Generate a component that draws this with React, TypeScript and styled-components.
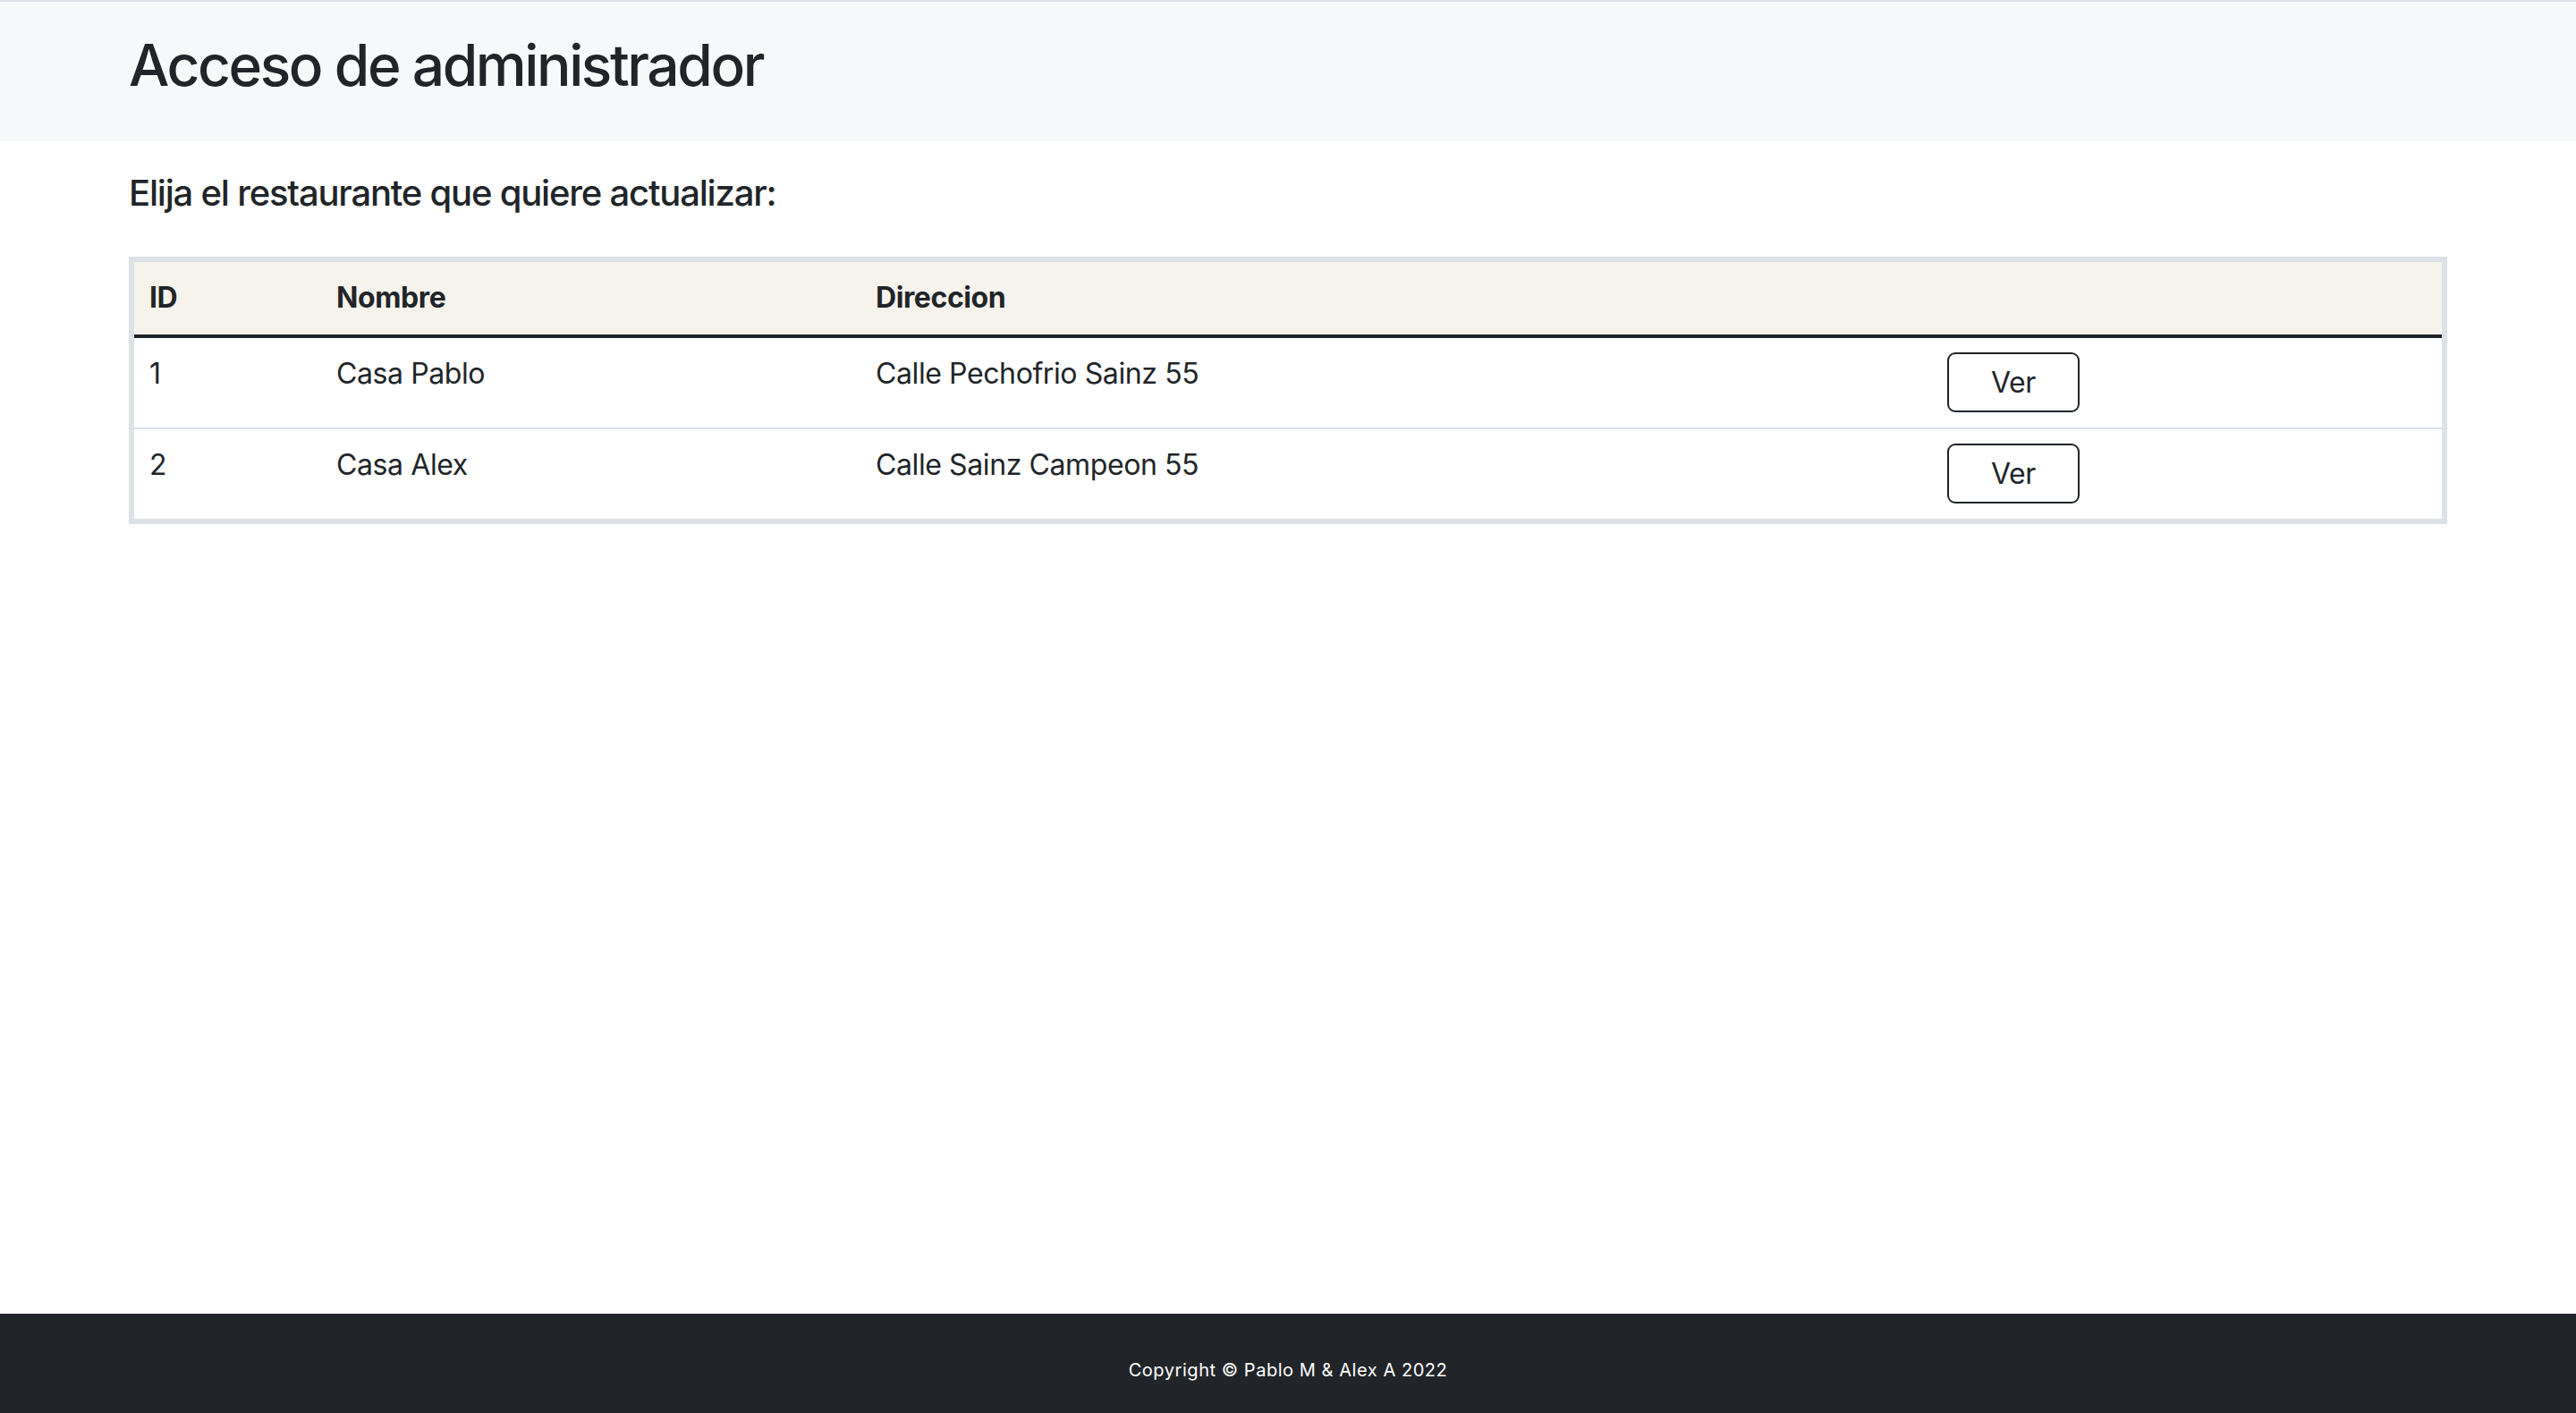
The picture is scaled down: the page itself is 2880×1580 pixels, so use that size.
import React from "react";
import styled, { createGlobalStyle } from "styled-components";

const GlobalStyle = createGlobalStyle`
  * { box-sizing: border-box; }
  html, body { margin: 0; padding: 0; }
  body {
    font-family: Inter, "Noto Sans", "Liberation Sans", sans-serif;
    color: #212529;
    background: #ffffff;
  }
`;

const Page = styled.div`
  min-height: 100vh;
  display: flex;
  flex-direction: column;
`;

const Header = styled.header`
  border-top: 2px solid #dee2e6;
  background: #f8f9fa;
  padding: 33px 0 46px;
`;

const Container = styled.div`
  width: 2592px;
  margin: 0 auto;
`;

const Title = styled.h1`
  margin: 0;
  font-size: 64px;
  font-weight: 500;
  line-height: 1.2;
  letter-spacing: -2.4px;
`;

const Main = styled.main`
  flex: 1;
  padding-top: 34px;
`;

const SubTitle = styled.h5`
  margin: 0 0 47px;
  font-size: 40px;
  font-weight: 500;
  line-height: 1.2;
  letter-spacing: -1.2px;
`;

const TableBox = styled.div`
  border: 6px solid #dee2e6;
`;

const Table = styled.table`
  width: 100%;
  border-collapse: collapse;
  table-layout: fixed;
  font-size: 32px;
  line-height: 48px;
  letter-spacing: -0.4px;
`;

const HeadRow = styled.tr`
  background: #f6f3ec;
  border-bottom: 4px solid #212529;
`;

const HeadCell = styled.th`
  text-align: left;
  font-weight: 700;
  padding: 16px 16px 17px 17px;
  vertical-align: top;
`;

const BodyRow = styled.tr<{ $last?: boolean }>`
  border-bottom: ${(p) => (p.$last ? "0" : "2px solid #dee2e6")};
`;

const Cell = styled.td<{ $action?: boolean }>`
  padding: 16px 16px 17px ${(p) => (p.$action ? "16px" : "17px")};
  vertical-align: top;
  font-weight: 400;
`;

const ViewButton = styled.button`
  display: block;
  width: 148px;
  height: 67px;
  padding: 0;
  border: 2px solid #212529;
  border-radius: 9px;
  background: #ffffff;
  color: #212529;
  font-family: inherit;
  font-size: 32px;
  line-height: 63px;
  letter-spacing: -0.4px;
  text-align: center;
  cursor: pointer;
`;

const Footer = styled.footer`
  background: #212529;
  color: #ffffff;
  text-align: center;
  padding: 48px 0 33px;
  font-size: 20px;
  line-height: 30px;
  letter-spacing: 0.55px;
`;

const rows = [
  { id: 1, nombre: "Casa Pablo", direccion: "Calle Pechofrio Sainz 55" },
  { id: 2, nombre: "Casa Alex", direccion: "Calle Sainz Campeon 55" },
];

export default function App() {
  return (
    <Page>
      <GlobalStyle />
      <Header>
        <Container>
          <Title>Acceso de administrador</Title>
        </Container>
      </Header>
      <Main>
        <Container>
          <SubTitle>Elija el restaurante que quiere actualizar:</SubTitle>
          <TableBox>
            <Table>
              <colgroup>
                <col style={{ width: 209 }} />
                <col style={{ width: 603 }} />
                <col style={{ width: 1199 }} />
                <col />
              </colgroup>
              <thead>
                <HeadRow>
                  <HeadCell>ID</HeadCell>
                  <HeadCell>Nombre</HeadCell>
                  <HeadCell>Direccion</HeadCell>
                  <HeadCell />
                </HeadRow>
              </thead>
              <tbody>
                {rows.map((r, i) => (
                  <BodyRow key={r.id} $last={i === rows.length - 1}>
                    <Cell>{r.id}</Cell>
                    <Cell>{r.nombre}</Cell>
                    <Cell>{r.direccion}</Cell>
                    <Cell $action>
                      <ViewButton type="button">Ver</ViewButton>
                    </Cell>
                  </BodyRow>
                ))}
              </tbody>
            </Table>
          </TableBox>
        </Container>
      </Main>
      <Footer>Copyright © Pablo M &amp; Alex A 2022</Footer>
    </Page>
  );
}
